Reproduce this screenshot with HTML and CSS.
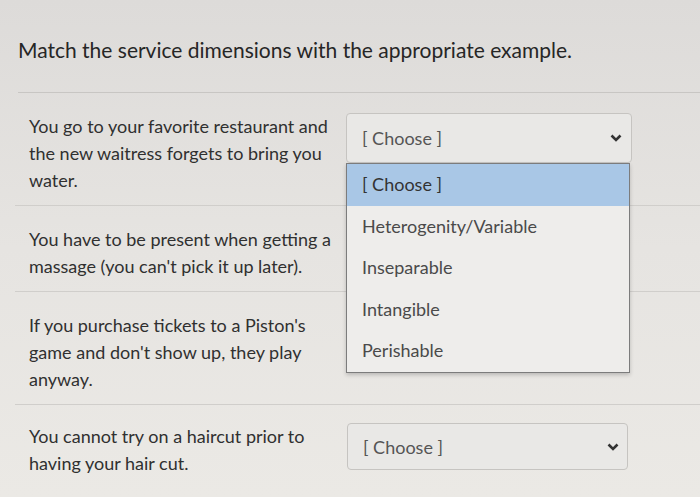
FILE: index.html
```html
<!DOCTYPE html>
<html lang="en">

<head>
    <meta charset="UTF-8">
    <title>Quiz question</title>
    <link rel="stylesheet" href="styles.css">
</head>

<body>

    <div class="question">
        <p class="question-text">Match the service dimensions with the appropriate example.</p>

        <div class="answer">
            <p class="answer-text">You go to your favorite restaurant and the new waitress forgets to bring you water.</p>
            <div class="select open">
                <span>[ Choose ]</span>
                <svg class="chevron" width="12" height="8" viewBox="0 0 12 8"><polyline points="1.5,1.5 6,6 10.5,1.5" fill="none" stroke="#333" stroke-width="2.6"/></svg>
                <ul class="options">
                    <li class="selected">[ Choose ]</li>
                    <li>Heterogenity/Variable</li>
                    <li>Inseparable</li>
                    <li>Intangible</li>
                    <li>Perishable</li>
                </ul>
            </div>
        </div>

        <div class="answer">
            <p class="answer-text">You have to be present when getting a massage (you can't pick it up later).</p>
        </div>

        <div class="answer">
            <p class="answer-text">If you purchase tickets to a Piston's game and don't show up, they play anyway.</p>
        </div>

        <div class="answer last">
            <p class="answer-text">You cannot try on a haircut prior to having your hair cut.</p>
            <div class="select small">
                <span>[ Choose ]</span>
                <svg class="chevron" width="12" height="8" viewBox="0 0 12 8"><polyline points="1.5,1.5 6,6 10.5,1.5" fill="none" stroke="#333" stroke-width="2.6"/></svg>
            </div>
        </div>
    </div>

</body>
</html>
```

FILE: styles.css
```css
body {
    margin: 0;
    background: linear-gradient(180deg, #dddbd9 0%, #e6e4e1 50%, #ebe9e5 100%);
    font-family: Lato, "Open Sans", sans-serif;
    color: #303030;
    height: 497px;
    overflow: hidden;
}

.question {
    margin-left: 15px;
    padding-top: 38px;
}

.question-text {
    margin: 0 0 0 3px;
    font-size: 21px;
    line-height: 24px;
    color: #262626;
    padding-bottom: 30px;
    border-bottom: 1px solid #c8c6c3;
}

.answer {
    display: flex;
    align-items: flex-start;
    gap: 4px;
    padding: 20px 0 11px 14px;
    border-bottom: 1px solid #d0cecb;
}

.answer.last {
    padding-top: 18px;
    border-bottom: none;
}

.answer-text {
    width: 313px;
    margin: 0;
    font-size: 18px;
    line-height: 27px;
}

.select {
    position: relative;
    width: 286px;
    height: 50px;
    box-sizing: border-box;
    border: 1px solid #c6c4c1;
    border-radius: 4px;
    background: #e9e8e6;
    display: flex;
    align-items: center;
    justify-content: space-between;
    padding: 0 9px 0 15px;
    font-size: 18px;
    color: #555;
}

.select.small {
    width: 281px;
    height: 47px;
    margin-left: 1px;
    padding-right: 8px;
}

.options {
    position: absolute;
    top: 49px;
    left: -1px;
    width: 282px;
    margin: 0;
    padding: 0;
    list-style: none;
    background: #eeedeb;
    border: 1px solid #7c7c7c;
    box-shadow: 0 2px 4px rgba(0, 0, 0, 0.2);
}

.options li {
    height: 41.6px;
    line-height: 41.6px;
    padding-left: 15px;
    color: #4a4a4a;
}

.options li.selected {
    background: #a9c7e6;
    color: #333;
}
```
